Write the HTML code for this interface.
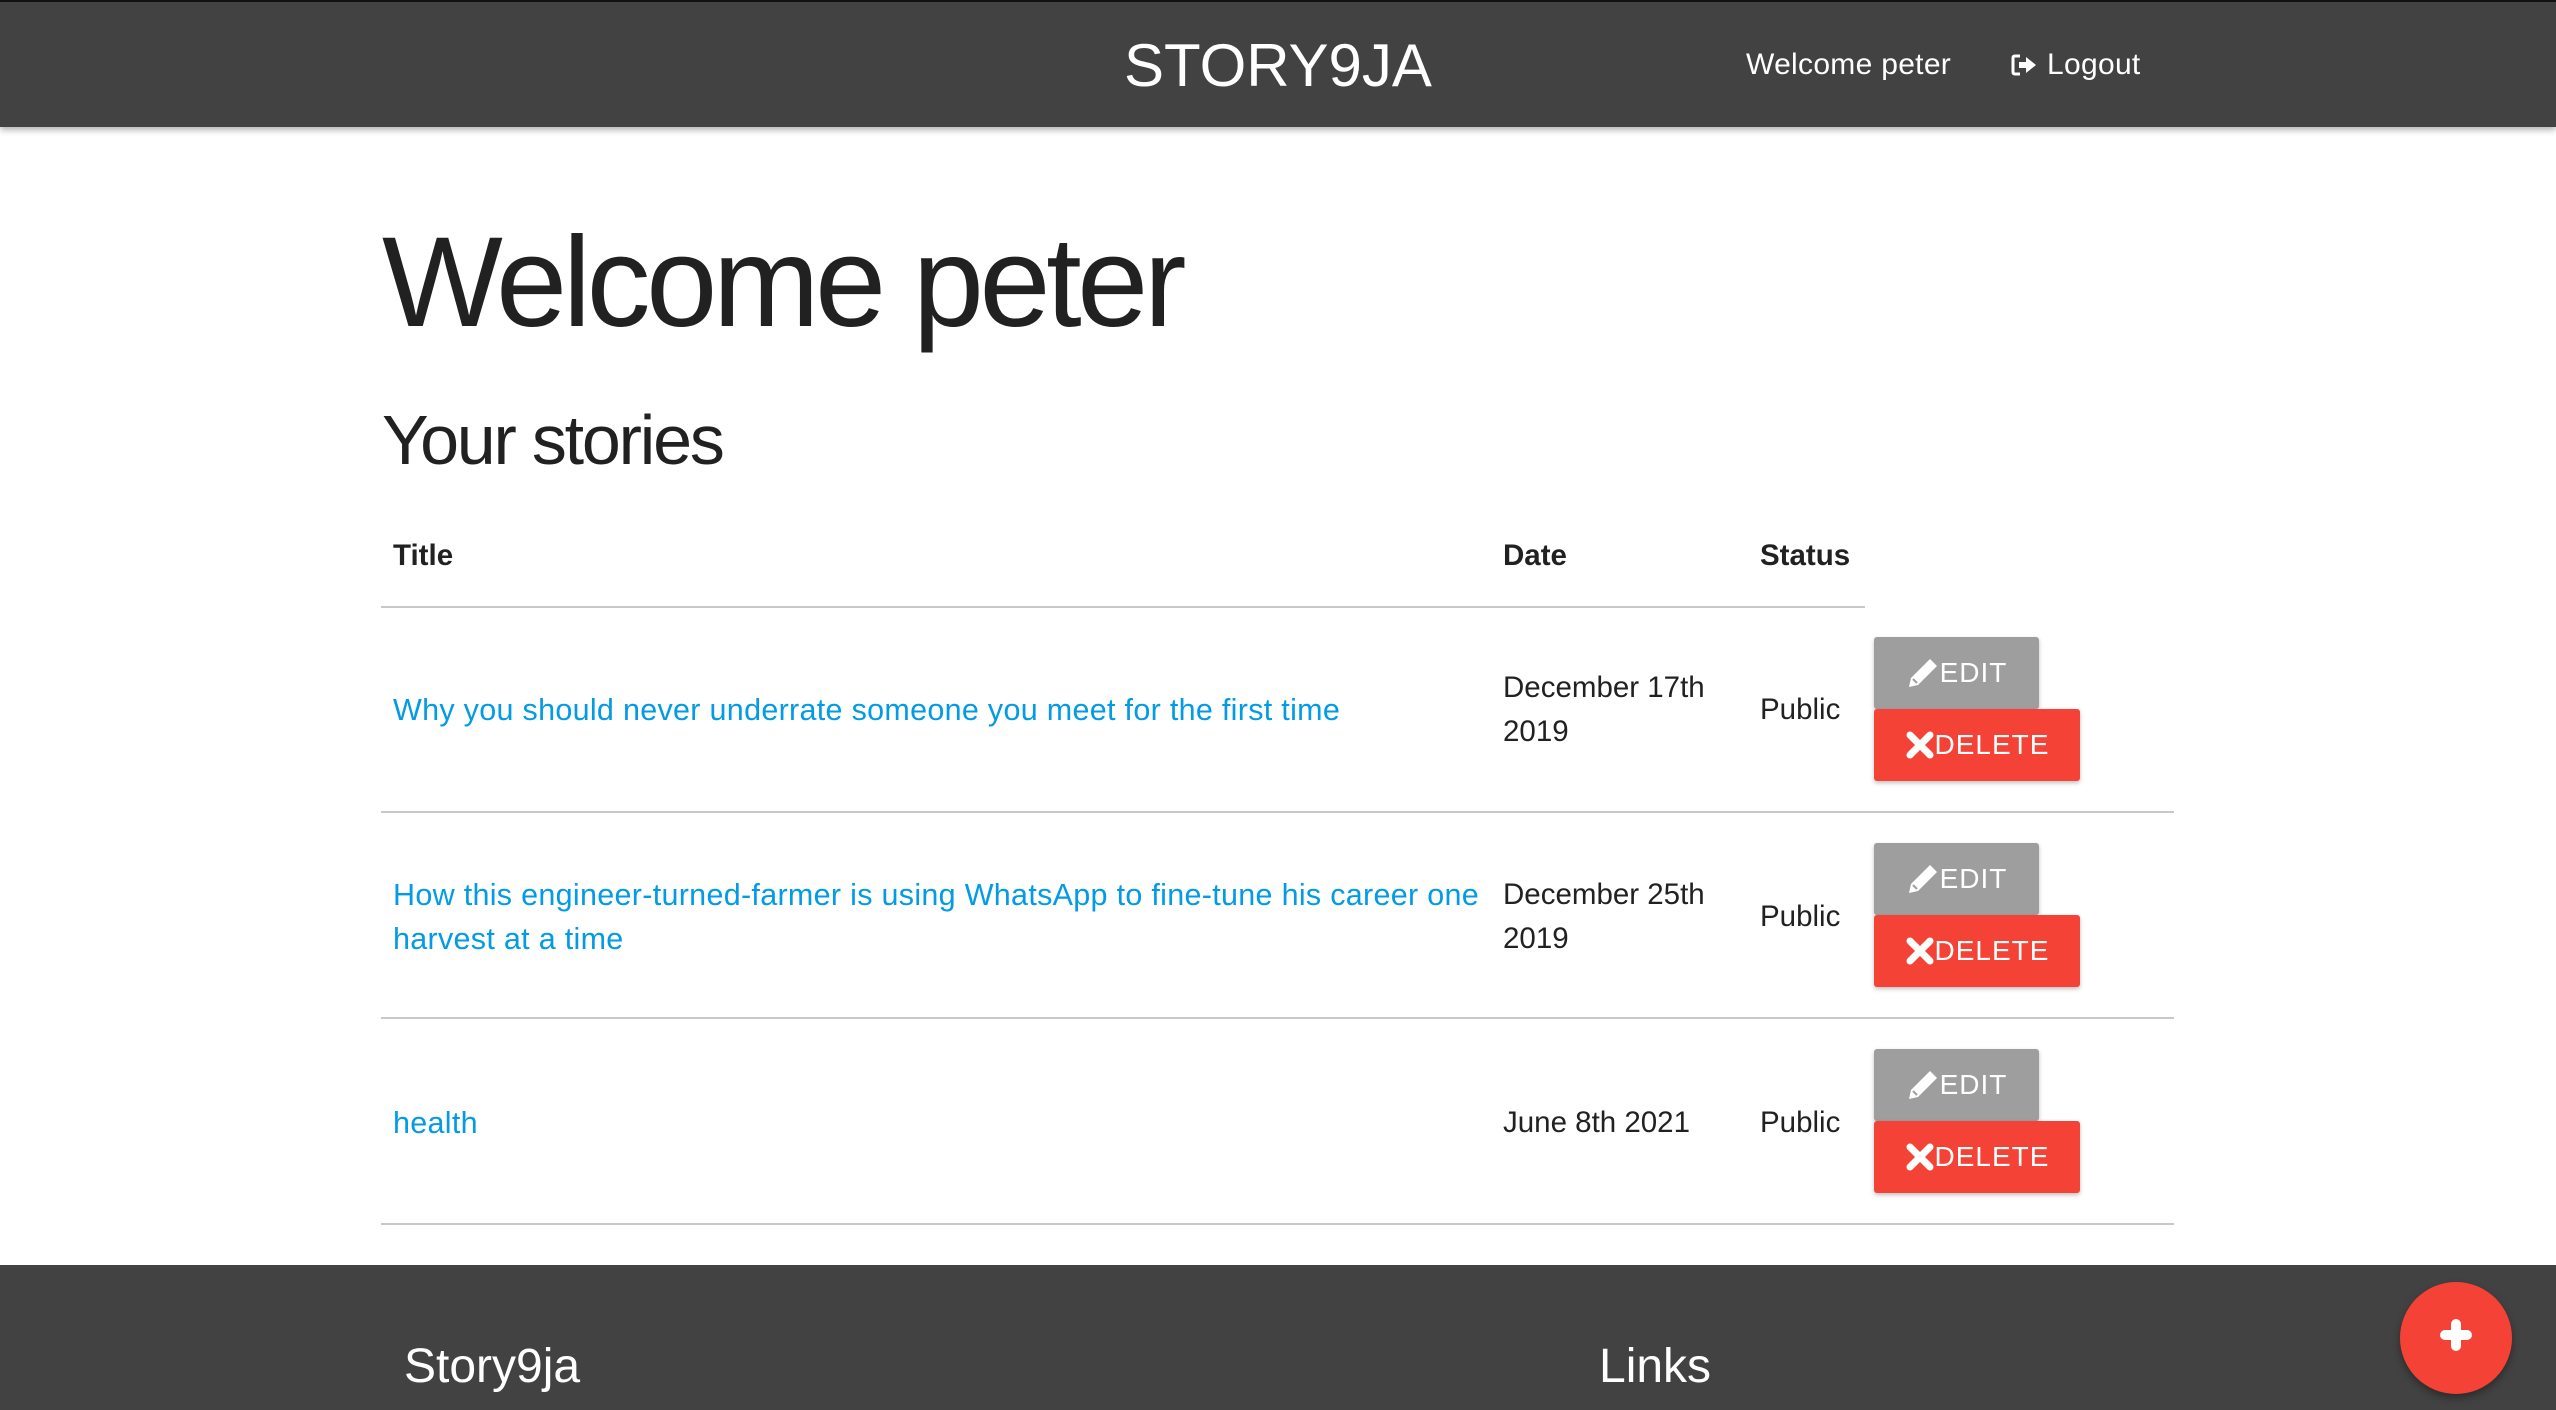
<!DOCTYPE html>
<html><head><meta charset="utf-8"><style>
*{margin:0;padding:0;box-sizing:border-box}
body{width:2556px;height:1410px;overflow:hidden;background:#fff;font-family:"Liberation Sans",sans-serif;color:#212121;position:relative}
.a{position:absolute;white-space:nowrap}
nav{position:absolute;left:0;top:0;width:2556px;height:127px;background:#424242;border-top:2px solid #111;box-shadow:0 3px 6px rgba(0,0,0,.3)}
.line{position:absolute;height:2px;background:#c8c8c8}
.td{font-size:29.5px;line-height:44px}
.lk{color:#039be5;font-size:30.5px;letter-spacing:0.3px}
.btn{position:absolute;color:#fff;font-size:28px;letter-spacing:1px;display:flex;align-items:center;justify-content:center;border-radius:3px;box-shadow:0 2px 4px rgba(0,0,0,.25)}
.edit{background:#9e9e9e;width:165px;height:72px}
.del{background:#f44336;width:206px;height:72px}
footer{position:absolute;left:0;top:1265px;width:2556px;height:145px;background:#424242}
</style></head><body>
<nav>
<div class="a" style="left:0;width:2556px;text-align:center;top:26px;font-size:60px;color:#fff;line-height:76px">STORY9JA</div>
<div class="a" style="left:1746px;top:45px;font-size:30px;color:#fff;line-height:36px;letter-spacing:0.3px">Welcome peter</div>
<svg class="a" style="left:2011px;top:51px" width="28" height="24" viewBox="0 0 28 24"><path d="M9 3H4Q2 3 2 5V19Q2 21 4 21H9" fill="none" stroke="#fff" stroke-width="3"/><path d="M8 9H15V4L25 12L15 20V15H8Z" fill="#fff"/></svg>
<div class="a" style="left:2047px;top:45px;font-size:30px;color:#fff;line-height:36px;letter-spacing:0.3px">Logout</div>
</nav>
<div class="a" style="left:382px;top:208px;font-size:128px;letter-spacing:-4.5px;line-height:150px">Welcome peter</div>
<div class="a" style="left:382px;top:400px;font-size:70px;letter-spacing:-2.2px;line-height:80px">Your stories</div>
<div class="a td" style="left:393px;top:534px;font-weight:bold">Title</div>
<div class="a td" style="left:1503px;top:534px;font-weight:bold">Date</div>
<div class="a td" style="left:1760px;top:534px;font-weight:bold">Status</div>
<div class="line" style="left:381px;top:606px;width:1484px"></div>

<div class="a td lk" style="left:393px;top:688px">Why you should never underrate someone you meet for the first time</div>
<div class="a td" style="left:1503px;top:666px">December 17th<br>2019</div>
<div class="a td" style="left:1760px;top:688px">Public</div>
<div class="line" style="left:381px;top:811px;width:1793px"></div>

<div class="a td lk" style="left:393px;top:873px">How this engineer-turned-farmer is using WhatsApp to fine-tune his career one<br>harvest at a time</div>
<div class="a td" style="left:1503px;top:873px">December 25th<br>2019</div>
<div class="a td" style="left:1760px;top:895px">Public</div>
<div class="line" style="left:381px;top:1017px;width:1793px"></div>

<div class="a td lk" style="left:393px;top:1101px">health</div>
<div class="a td" style="left:1503px;top:1101px">June 8th 2021</div>
<div class="a td" style="left:1760px;top:1101px">Public</div>
<div class="line" style="left:381px;top:1223px;width:1793px"></div>

<div class="btn edit" style="left:1874px;top:637px"><svg width="34" height="34" viewBox="0 0 34 34"><path d="M24 3L31 10L12 29L3 31L5 22Z" fill="#fff"/><path d="M7 23L11 27" stroke="#9e9e9e" stroke-width="2"/></svg>EDIT</div>
<div class="btn del" style="left:1874px;top:709px"><svg width="30" height="30" viewBox="0 0 30 30"><path d="M5 5L25 25M25 5L5 25" stroke="#fff" stroke-width="7" stroke-linecap="round"/></svg>DELETE</div>
<div class="btn edit" style="left:1874px;top:843px"><svg width="34" height="34" viewBox="0 0 34 34"><path d="M24 3L31 10L12 29L3 31L5 22Z" fill="#fff"/><path d="M7 23L11 27" stroke="#9e9e9e" stroke-width="2"/></svg>EDIT</div>
<div class="btn del" style="left:1874px;top:915px"><svg width="30" height="30" viewBox="0 0 30 30"><path d="M5 5L25 25M25 5L5 25" stroke="#fff" stroke-width="7" stroke-linecap="round"/></svg>DELETE</div>
<div class="btn edit" style="left:1874px;top:1049px"><svg width="34" height="34" viewBox="0 0 34 34"><path d="M24 3L31 10L12 29L3 31L5 22Z" fill="#fff"/><path d="M7 23L11 27" stroke="#9e9e9e" stroke-width="2"/></svg>EDIT</div>
<div class="btn del" style="left:1874px;top:1121px"><svg width="30" height="30" viewBox="0 0 30 30"><path d="M5 5L25 25M25 5L5 25" stroke="#fff" stroke-width="7" stroke-linecap="round"/></svg>DELETE</div>

<footer>
<div class="a" style="left:404px;top:74px;font-size:48px;color:#fff;line-height:56px">Story9ja</div>
<div class="a" style="left:1599px;top:74px;font-size:48px;color:#fff;line-height:56px">Links</div>
</footer>
<div class="a" style="left:2400px;top:1282px;width:112px;height:112px;border-radius:50%;background:#f44336;box-shadow:0 4px 8px rgba(0,0,0,.35)"><svg width="112" height="112" viewBox="0 0 112 112"><path d="M56 42V64M45 53H67" stroke="#fff" stroke-width="10" stroke-linecap="round"/></svg></div>
</body></html>
